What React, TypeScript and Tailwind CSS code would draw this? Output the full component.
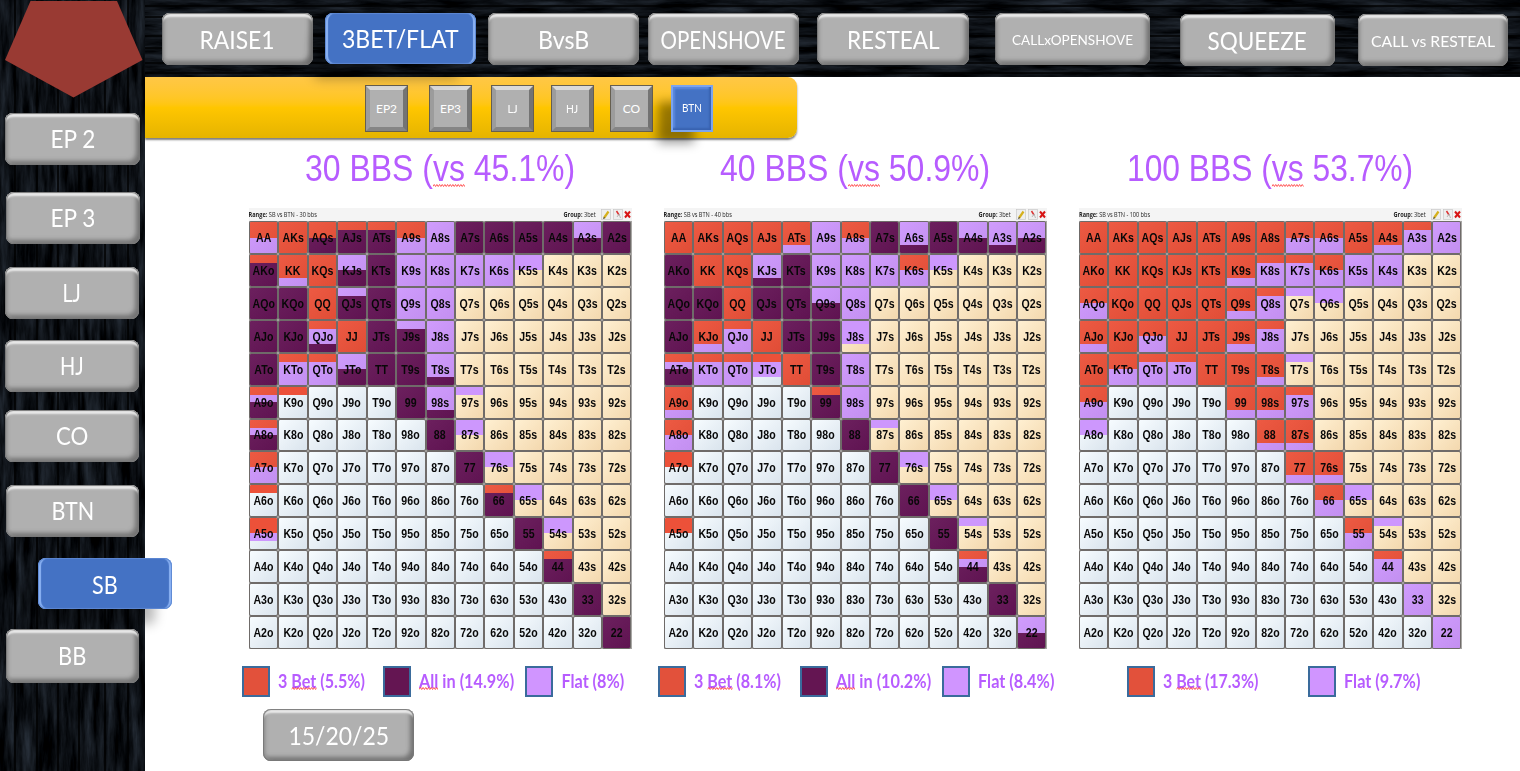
import { useLayoutEffect, useRef } from "react";

type FitProps = { text: string; width: number; className?: string; wavy?: string; bold?: string };

/* Single line of text condensed horizontally to a given width. */
function Fit({ text, width, className = "", wavy, bold }: FitProps) {
  const ref = useRef<HTMLSpanElement>(null);
  useLayoutEffect(() => {
    const el = ref.current;
    if (el) el.style.transform = `scaleX(${width / el.offsetWidth})`;
  }, [text, width]);
  const [before, after] = wavy ? text.split(wavy) : [text, ""];
  return (
    <span className="flex shrink-0 justify-center" style={{ width }}>
      <span ref={ref} className={`inline-block shrink-0 origin-center whitespace-nowrap ${className}`}>
        {bold && <b>{bold} </b>}
        {before}
        {wavy && (
          <span className="relative">
            {wavy}
            <svg className="absolute bottom-[2px] left-0 h-[3px] w-full overflow-hidden" aria-hidden="true">
              <path
                d="M0 2.500 1.500.5l1.500 2 1.500-2 1.500 2 1.500-2 1.500 2 1.500-2 1.500 2 1.500-2 1.500 2 1.500-2 1.500 2 1.500-2 1.500 2 1.500-2 1.500 2 1.500-2 1.500 2 1.500-2 1.500 2 1.500-2 1.500 2 1.500-2 1.500 2 1.500-2 1.500 2"
                fill="none"
                stroke="#ff3b3b"
                strokeWidth=".9"
              />
            </svg>
          </span>
        )}
        {after}
      </span>
    </span>
  );
}

const SHAPE = "flex shrink-0 items-center justify-center text-white font-['Lato',sans-serif] ";
const GREY =
  "rounded-[8px] bg-[#b0b0b0] shadow-[inset_0_0_1px_1px_#777,inset_0_5px_2px_-1px_#e9e9e9,inset_3px_0_3px_0_#969696,inset_-4px_-4px_4px_0_#747474] ";
const BLUE =
  "rounded-[8px] bg-[#4472c4] shadow-[inset_0_0_1px_1px_#5b87d2,inset_3px_0_1px_0_#8eb5f5,inset_-3px_0_1px_0_#8eb5f5,-14px_18px_12px_-3px_rgba(0,0,0,0.28)] ";

type Btn = { label: string; tw: number; font: string; box: string; active?: boolean };

const TOP: Btn[] = [
  { label: "RAISE1", tw: 75, font: "text-[25px]", box: "h-[52px] w-[151px]" },
  { label: "3BET/FLAT", tw: 117, font: "text-[25px] pt-[2px]", box: "h-[51px] ml-[12px] w-[151px]", active: true },
  { label: "BvsB", tw: 51, font: "text-[25px]", box: "h-[52px] ml-[12px] w-[151px]" },
  { label: "OPENSHOVE", tw: 125, font: "text-[25px]", box: "h-[52px] ml-[9px] w-[151px]" },
  { label: "RESTEAL", tw: 93, font: "text-[25px]", box: "h-[52px] ml-[18px] w-[152px]" },
  { label: "CALLxOPENSHOVE", tw: 121, font: "text-[14px]", box: "h-[52px] ml-[26px] w-[155px]" },
  { label: "SQUEEZE", tw: 99, font: "text-[25px]", box: "h-[52px] mt-[1px] ml-[30px] w-[155px]" },
  { label: "CALL vs RESTEAL", tw: 124, font: "text-[16px]", box: "h-[52px] mt-[1px] ml-[23px] w-[150px]" },
];

const SIDE: Btn[] = [
  { label: "EP 2", tw: 45, font: "text-[25px]", box: "w-[135px] h-[52px]" },
  { label: "EP 3", tw: 45, font: "text-[25px]", box: "mt-[27px] ml-px w-[134px] h-[52px]" },
  { label: "LJ", tw: 18, font: "text-[25px]", box: "mt-[23px] w-[134px] h-[52px]" },
  { label: "HJ", tw: 24, font: "text-[25px]", box: "mt-[21px] w-[134px] h-[52px]" },
  { label: "CO", tw: 32, font: "text-[25px]", box: "mt-[18px] w-[134px] h-[52px]" },
  { label: "BTN", tw: 43, font: "text-[25px]", box: "mt-[23px] ml-px w-[133px] h-[52px]" },
  { label: "SB", tw: 26, font: "text-[25px] pt-[2px]", box: "mt-[21px] ml-[33px] w-[134px] h-[51px]", active: true },
  { label: "BB", tw: 28, font: "text-[25px]", box: "mt-[20px] ml-px w-[133px] h-[54px]" },
];

const SEATS: Btn[] = [
  { label: "EP2", tw: 21, font: "text-[12px]", box: "w-[43px]" },
  { label: "EP3", tw: 21, font: "text-[12px]", box: "ml-[21px] w-[43px]" },
  { label: "LJ", tw: 10, font: "text-[12px]", box: "ml-[19px] w-[43px]" },
  { label: "HJ", tw: 12, font: "text-[12px]", box: "ml-[17px] w-[43px]" },
  { label: "CO", tw: 17, font: "text-[12px]", box: "ml-[16px] w-[43px]" },
  { label: "BTN", tw: 20, font: "text-[11px]", box: "ml-[18px] w-[42px]", active: true },
];

/* Quarters of each cell: 3bet, flat, all-in; the rest keeps the base colour. */
type Codes = Record<string, string>;
type Legend = { color: string; text: string; tw: number; wavy?: string; box: string };
type Chart = { title: string; titleW: number; name: string; codes: Codes; legend: Legend[]; pad: string };

const RED = "bg-[#e2513b]";
const DARK = "bg-[#641552]";
const LILAC = "bg-[#d095ff]";

const CHARTS: Chart[] = [
  {
    title: "30 BBS (vs 45.1%)", titleW: 270, name: "SB vs BTN - 30 bbs", pad: "pl-0",
    codes: {
      "400": "AKs KQs QQ JJ",
      "220": "AA A9s A7o",
      "202": "AQs",
      "103": "AJs ATs AKo 66 44",
      "040": "A8s K9s K8s K7s K6s Q9s Q8s J8s",
      "004": "A7s A6s A5s A4s A2s KTs AQo KQo QTs AJo KJo JTs ATo TT T9s 99 88 77 55 33 22",
      "022": "A3s KJs JTo",
      "310": "KK",
      "020": "K5s 87s 76s 65s 54s",
      "013": "QJs J9s",
      "121": "QJo",
      "130": "KTo QTo",
      "031": "T8s 98s",
      "112": "A9o A8o",
      "100": "K9o A6o",
      "010": "97s",
      "210": "A5o",
    },
    legend: [
      { color: RED, text: "3 Bet (5.5%)", tw: 87, wavy: "Bet", box: "w-[141px]" },
      { color: DARK, text: "All in (14.9%)", tw: 95, wavy: "All", box: "w-[142px]" },
      { color: LILAC, text: "Flat (8%)", tw: 63, box: "" },
    ],
  },
  {
    title: "40 BBS (vs 50.9%)", titleW: 270, name: "SB vs BTN - 40 bbs", pad: "pl-[1px]",
    codes: {
      "400": "AA AKs AQs AJs KK KQs QQ JJ TT",
      "310": "ATs KJo A9o",
      "040": "A9s K9s K8s K7s Q8s T8s 98s",
      "220": "A8s K6s A8o",
      "004": "A7s A5s AKo KTs AQo KQo QJs QTs AJo JTs J9s T9s 88 77 66 55 33",
      "031": "A6s A3s KJs",
      "022": "A4s A2s Q9s 22",
      "020": "K5s 76s 65s",
      "130": "QJo KTo QTo",
      "030": "J8s",
      "112": "ATo 44",
      "120": "JTo",
      "103": "99",
      "010": "87s 54s",
      "200": "A7o A5o",
    },
    legend: [
      { color: RED, text: "3 Bet (8.1%)", tw: 87, wavy: "Bet", box: "w-[142px]" },
      { color: DARK, text: "All in (10.2%)", tw: 95, wavy: "All", box: "w-[142px]" },
      { color: LILAC, text: "Flat (8.4%)", tw: 76, box: "" },
    ],
  },
  {
    title: "100 BBS (vs 53.7%)", titleW: 286, name: "SB vs BTN - 100 bbs", pad: "pl-[55px]",
    codes: {
      "400": "AA AKs AQs AJs ATs A9s A8s A5s AKo KK KQs KJs KTs KQo QQ QJs QTs KJo JJ JTs ATo TT T9s",
      "220": "A7s A6s K6s AQo QJo KTo A9o 66 55",
      "310": "A4s K9s Q9s AJo J9s T8s 99 98s 88 87s 77 76s",
      "130": "A3s K8s K7s Q8s J8s QTo JTo 97s 44",
      "040": "A2s K5s K4s 33 22",
      "010": "Q7s T7s 54s",
      "020": "Q6s A8o 65s",
    },
    legend: [
      { color: RED, text: "3 Bet (17.3%)", tw: 95, wavy: "Bet", box: "w-[181px]" },
      { color: LILAC, text: "Flat (9.7%)", tw: 76, box: "" },
    ],
  },
];

const RANKS = "AKQJT98765432".split("");

function hand(r: number, c: number) {
  if (r === c) return RANKS[r] + RANKS[r];
  return r < c ? `${RANKS[r]}${RANKS[c]}s` : `${RANKS[c]}${RANKS[r]}o`;
}

function Cell({ label, code, suited }: { label: string; code: string; suited: boolean }) {
  const colors = ["#ec5139", "#cd97fd", "#641455"];
  const stops: string[] = [];
  let at = 0;
  code.split("").forEach((n, i) => {
    const end = at + Number(n) * 25;
    if (end > at) stops.push(`${colors[i]} ${at}% ${end}%`);
    at = end;
  });
  if (at < 100) stops.push(`transparent ${at}% 100%`);
  const shade = at === 100 ? "linear-gradient(135deg, rgba(255,255,255,0.05), rgba(0,0,0,0.05)), " : "";
  return (
    <div
      className={`overflow-hidden rounded-[2px] border border-[#6f6b69] ${
        suited ? "bg-linear-to-br from-[#fff0d2] to-[#f3d8ae]" : "bg-linear-to-br from-[#f7fcff] to-[#dae4ed]"
      }`}
    >
      <div
        className="flex h-full items-center justify-center"
        style={{ backgroundImage: `${shade}linear-gradient(${stops.join(",")})` }}
      >
        <span className="scale-x-[0.88] pt-px text-[12px] leading-none font-bold tracking-[0.1px] text-[#080808] font-['Liberation_Sans',sans-serif]">
          {label}
        </span>
      </div>
    </div>
  );
}

function Grid({ chart }: { chart: Chart }) {
  const map: Record<string, string> = {};
  Object.entries(chart.codes).forEach(([k, v]) => v.split(" ").forEach((h) => (map[h] = k)));
  return (
    <div className="w-[382.500px]">
      <div className="flex h-[13px] items-center bg-[#f4f4f4] text-[6.5px] text-[#222] font-['Open_Sans',sans-serif]">
        <Fit text={chart.name} bold="Range:" width={chart.name.length > 18 ? 71 : 68} className="pt-px leading-none" />
        <span className="ml-auto flex items-center">
          <Fit text="3bet" bold="Group:" width={32} className="pt-px leading-none" />
        </span>
        <svg className="ml-[5px] h-[11px] w-[31px]" viewBox="0 0 31 11">
          <rect x=".5" y=".5" width="9" height="10" fill="#eee" stroke="#c9c9c9" strokeWidth=".7" />
          <path d="M3 9 7.5 2.5" stroke="#d5b01c" strokeWidth="2.2" />
          <path d="M2.4 9.7 3.6 8.3" stroke="#444" strokeWidth="1.2" />
          <rect x="12.5" y=".5" width="9" height="10" fill="#eee" stroke="#c9c9c9" strokeWidth=".7" />
          <path d="M15.5 2 18 6" stroke="#dc3030" strokeWidth="1.5" />
          <path d="M16 8 18 5l1.5 4" stroke="#aaa" strokeWidth=".8" fill="none" />
          <path d="m24 2.500 5 6m0-6-5 6" stroke="#d71515" strokeWidth="2" />
        </svg>
      </div>
      <div className="grid h-[428px] grid-cols-13 grid-rows-13 bg-[#a9a7a5]">
        {RANKS.map((_, r) =>
          RANKS.map((__, c) => {
            const h = hand(r, c);
            return <Cell key={h} label={h} code={map[h] ?? "000"} suited={c > r} />;
          })
        )}
      </div>
    </div>
  );
}

function Wood({ w, h, vertical }: { w: number; h: number; vertical?: boolean }) {
  const id = vertical ? "grain-v" : "grain-h";
  return (
    <svg className="absolute inset-0" width={w} height={h} aria-hidden="true">
      <filter id={id} x="0" y="0" width="100%" height="100%" colorInterpolationFilters="sRGB">
        <feTurbulence type="fractalNoise" baseFrequency={vertical ? "0.13 0.018" : "0.018 0.13"} numOctaves={5} seed={7} />
        <feColorMatrix values="0.26 0 0 0 -0.08  0.3 0 0 0 -0.085  0.35 0 0 0 -0.09  0 0 0 0 1" />
      </filter>
      <rect width={w} height={h} fill="#05080c" />
      <rect width={w} height={h} filter={`url(#${id})`} />
      {vertical
        ? [14, 36, 57, 78, 104, 127].map((x) => <rect key={x} x={x} width="2" height={h} fill="#000" opacity=".75" />)
        : [5, 16, 35, 47, 62, 72].map((y) => <rect key={y} y={y} width={w} height="2" fill="#000" opacity=".7" />)}
    </svg>
  );
}

export default function App() {
  return (
    <div className="flex h-[771px] w-[1520px] overflow-hidden bg-white">
      <aside className="relative z-20 h-full w-[145px] shrink-0">
        <Wood w={145} h={771} vertical />
        <div className="relative flex flex-col items-start pl-[4px]">
          <svg className="h-[98px] w-[139px]" viewBox="0 0 139 98">
            <path d="M26.500 1H113L138.500 60 69.500 97.500 1 60Z" fill="#993a33" />
          </svg>
          <div className="mt-[15px] ml-px flex flex-col items-start">
            {SIDE.map((b) => (
              <button key={b.label} className={SHAPE + (b.active ? BLUE : GREY) + b.box}>
                <Fit text={b.label} width={b.tw} className={b.font} />
              </button>
            ))}
          </div>
        </div>
      </aside>

      <div className="flex flex-1 flex-col">
        <header className="relative z-10 h-[77px] w-[1375px]">
          <Wood w={1375} h={77} />
          <nav className="relative flex items-start pt-[13px] pl-[17px]">
            {TOP.map((b) => (
              <button key={b.label} className={SHAPE + (b.active ? BLUE : GREY) + b.box}>
                <Fit text={b.label} width={b.tw} className={"pt-px " + b.font} />
              </button>
            ))}
          </nav>
        </header>

        <nav className="flex h-[61px] w-[652px] items-start rounded-r-[9px] bg-linear-to-b from-[#ffc746] via-[#ffc600] to-[#e5b400] pt-[8px] pl-[220px] shadow-[0_2px_2px_rgba(0,0,0,0.5)]">
          {SEATS.map((b) => (
            <button
              key={b.label}
              className={
                SHAPE +
                "h-[47px] " +
                (b.active
                  ? "border-2 border-[#7ba4ee] bg-[#4472c4] shadow-[inset_-2px_-2px_2px_#3862b0,inset_2px_2px_2px_#5b8ae0,-16px_14px_10px_-3px_rgba(0,0,0,0.4)] "
                  : "border-[5px] border-t-[#dadada] border-r-[#747474] border-b-[#858585] border-l-[#9c9c9c] bg-[#b0b0b0] outline outline-[#665f50] -outline-offset-1 ") +
                b.box
              }
            >
              <Fit text={b.label} width={b.tw} className={b.font} />
            </button>
          ))}
        </nav>

        <main className="flex pt-[9px] pl-[97px]">
          {CHARTS.map((c) => (
            <section key={c.name} className="w-[415px]">
              <h2 className="flex h-[44px] w-[397px] items-center justify-center text-[#b75cff] font-['Liberation_Sans',sans-serif]">
                <Fit text={c.title} width={c.titleW} className="text-[36px] leading-[40px]" wavy="vs" />
              </h2>
              <div className="mt-[17px] ml-[7px]">
                <Grid chart={c} />
              </div>
              <div className={`mt-[16px] flex h-[32px] items-center ${c.pad}`}>
                {c.legend.map((l) => (
                  <div key={l.text} className={`flex items-center gap-[8px] ${l.box}`}>
                    <span className={`h-[31px] w-[28px] shrink-0 border-2 border-[#3a6b9c] ${l.color}`} />
                    <Fit text={l.text} width={l.tw} wavy={l.wavy} className="text-[18px] font-bold text-[#b75cff] font-['Lato',sans-serif]" />
                  </div>
                ))}
              </div>
            </section>
          ))}
        </main>

        <button className={SHAPE + GREY + "mt-[12px] ml-[118px] h-[52px] w-[151px]"}>
          <Fit text="15/20/25" width={101} className="pt-px text-[25px]" />
        </button>
      </div>
    </div>
  );
}
